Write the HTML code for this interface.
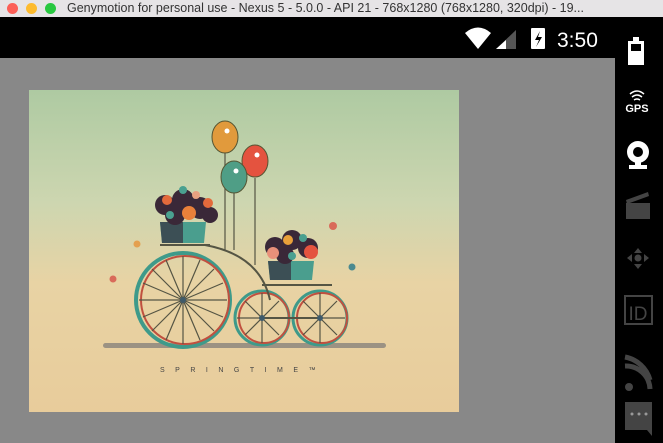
<!DOCTYPE html>
<html><head><style>
body{margin:0;width:663px;height:443px;overflow:hidden;background:#888;font-family:"Liberation Sans",sans-serif;position:relative}
#tb{position:absolute;left:0;top:0;width:663px;height:17px;background:#e6e4e6;font-size:12.5px;color:#333;line-height:17px}
#tb span{position:absolute;left:67px;white-space:nowrap}
.dot{position:absolute;top:3px;width:11px;height:11px;border-radius:50%}
#sb{position:absolute;left:0;top:17px;width:663px;height:41px;background:#000}
#side{position:absolute;left:615px;top:17px;width:48px;height:426px;background:#000}
</style></head><body>
<div id="tb"><div class="dot" style="left:7px;background:#fc5f57"></div><div class="dot" style="left:26px;background:#fdbb2e"></div><div class="dot" style="left:45px;background:#28c840"></div><span>Genymotion for personal use - Nexus 5 - 5.0.0 - API 21 - 768x1280 (768x1280, 320dpi) - 19...</span></div>
<div id="sb"></div>
<div id="side"></div>
<svg style="position:absolute;left:0;top:0" width="663" height="443">
<path d="M465,33 Q478,22 491,33 L478,49Z" fill="#fff"/>
<polygon points="496,49 516,49 516,30" fill="#555"/><polygon points="496,49 506,49 506,40" fill="#fff"/>
<rect x="531" y="28" width="14" height="21" rx="1" fill="#fff"/><path d="M540,31 L535,40 L539,40 L536,47 L542,37 L538,37Z" fill="#000"/>
<text x="557" y="47" fill="#fff" font-size="21" font-family="Liberation Sans">3:50</text>
<rect x="628" y="41" width="16" height="24" fill="#fff"/><rect x="633" y="37" width="6" height="4" fill="#fff"/><rect x="631" y="44" width="10" height="7" fill="#000"/>
<path d="M630,94 Q637,88 644,94 M632,97 Q637,93 642,97 M634,100 Q637,98 640,100" stroke="#fff" stroke-width="1.5" fill="none"/>
<text x="637" y="112" fill="#fff" font-size="11" font-weight="bold" text-anchor="middle">GPS</text>
<circle cx="638" cy="152" r="11" fill="#fff"/><circle cx="638" cy="152" r="5" fill="#000"/><rect x="629" y="165" width="18" height="4" fill="#fff"/><rect x="635" y="161" width="6" height="5" fill="#fff"/>
<rect x="626" y="203" width="24" height="16" fill="#444"/><path d="M626,200 L648,192 L649,196 L627,204Z" fill="#444"/>
<polygon points="638,248 634,253 642,253" fill="#444"/><polygon points="638,269 634,264 642,264" fill="#444"/><polygon points="627,258 632,254 632,262" fill="#444"/><polygon points="649,258 644,254 644,262" fill="#444"/><circle cx="638" cy="258" r="3.5" fill="#444"/>
<rect x="625" y="296" width="27" height="28" fill="none" stroke="#444" stroke-width="2"/><text x="638" y="320" fill="#444" font-size="19" text-anchor="middle">ID</text>
<path d="M625,366 A24,24 0 0,1 650,389 M625,357 A32,32 0 0,1 650,380" stroke="#444" stroke-width="5" fill="none"/><circle cx="629" cy="387" r="4" fill="#444"/>
<path d="M625,402 H652 V436 L647,430 H625Z" fill="#444"/><circle cx="632" cy="414" r="1.5" fill="#999"/><circle cx="639" cy="414" r="1.5" fill="#999"/><circle cx="646" cy="414" r="1.5" fill="#999"/>
<defs><linearGradient id="bg" x1="0" y1="0" x2="0" y2="1"><stop offset="0" stop-color="#aecaa2"/><stop offset="0.35" stop-color="#cdd6b0"/><stop offset="0.6" stop-color="#e8d3a4"/><stop offset="1" stop-color="#e8cc9b"/></linearGradient></defs>
<rect x="29" y="90" width="430" height="322" fill="url(#bg)"/>
<rect x="103" y="343" width="283" height="5" rx="2.5" fill="#9b9283"/>
<g fill="none" stroke-width="1.2">
<circle cx="183" cy="300" r="47" stroke="#3e9a8a" stroke-width="4"/><circle cx="185" cy="300" r="44" stroke="#c0503f" stroke-width="2"/>
<circle cx="262" cy="318" r="27" stroke="#3e9a8a" stroke-width="3"/><circle cx="264" cy="318" r="25" stroke="#c0503f" stroke-width="2"/>
<circle cx="320" cy="318" r="27" stroke="#3e9a8a" stroke-width="3"/><circle cx="322" cy="318" r="25" stroke="#c0503f" stroke-width="2"/>
<g stroke="#554">
<path d="M183,256 V344 M139,300 H227 M152,269 L214,331 M214,269 L152,331 M166,260 L200,340 M200,260 L166,340 M143,283 L223,317 M223,283 L143,317"/>
<path d="M262,293 V343 M237,318 H287 M245,301 L279,335 M279,301 L245,335"/>
<path d="M320,293 V343 M295,318 H345 M303,301 L337,335 M337,301 L303,335"/>
<path d="M160,245 H210 M205,245 Q260,255 270,300 M262,285 H332 M262,318 H320" stroke-width="2"/>
<path d="M225,150 V250 M234,192 V250 M255,178 V265"/>
</g></g>
<circle cx="183" cy="300" r="3" fill="#3e5a6a"/><circle cx="262" cy="318" r="3" fill="#3e5a6a"/><circle cx="320" cy="318" r="3" fill="#3e5a6a"/>
<ellipse cx="225" cy="137" rx="13" ry="16" fill="#e19a3c" stroke="#553" /><ellipse cx="255" cy="161" rx="13" ry="16" fill="#e4533f" stroke="#553"/><ellipse cx="234" cy="177" rx="13" ry="16" fill="#4f9e86" stroke="#553"/>
<circle cx="227" cy="131" r="2.5" fill="#fff"/><circle cx="257" cy="155" r="2.5" fill="#fff"/><circle cx="236" cy="171" r="2.5" fill="#fff"/>
<path d="M160,222 H206 L204,243 H162Z" fill="#4a9e8e"/><path d="M160,222 H183 V243 H162Z" fill="#3c4f55"/>
<path d="M268,261 H314 L312,280 H270Z" fill="#4a9e8e"/><path d="M268,261 H291 V280 H270Z" fill="#3c4f55"/>
<g fill="#3a2838"><circle cx="165" cy="205" r="10"/><circle cx="183" cy="200" r="11"/><circle cx="200" cy="208" r="11"/><circle cx="175" cy="215" r="10"/><circle cx="210" cy="215" r="8"/>
<circle cx="275" cy="247" r="10"/><circle cx="292" cy="240" r="10"/><circle cx="308" cy="248" r="10"/><circle cx="285" cy="255" r="9"/></g>
<g><circle cx="167" cy="200" r="5" fill="#e36a3c"/><circle cx="189" cy="213" r="7" fill="#e9803a"/><circle cx="208" cy="203" r="5" fill="#e36a3c"/><circle cx="196" cy="195" r="4" fill="#e8a080"/><circle cx="170" cy="215" r="4" fill="#4aa090"/><circle cx="183" cy="190" r="4" fill="#4aa090"/>
<circle cx="288" cy="240" r="5" fill="#e9a03a"/><circle cx="273" cy="253" r="6" fill="#e8907a"/><circle cx="311" cy="252" r="7" fill="#e4533f"/><circle cx="303" cy="238" r="4" fill="#4aa090"/><circle cx="292" cy="256" r="4" fill="#4aa090"/></g>
<g fill="#d96a5a"><circle cx="333" cy="226" r="4"/><circle cx="113" cy="279" r="3.5"/><circle cx="137" cy="244" r="3.5" fill="#e4a050"/><circle cx="352" cy="267" r="3.5" fill="#4a8a90"/></g>
<text x="160" y="372" font-size="7" fill="#444" letter-spacing="10.5" font-family="Liberation Sans">SPRINGTIME™</text>
</svg>
</body></html>
